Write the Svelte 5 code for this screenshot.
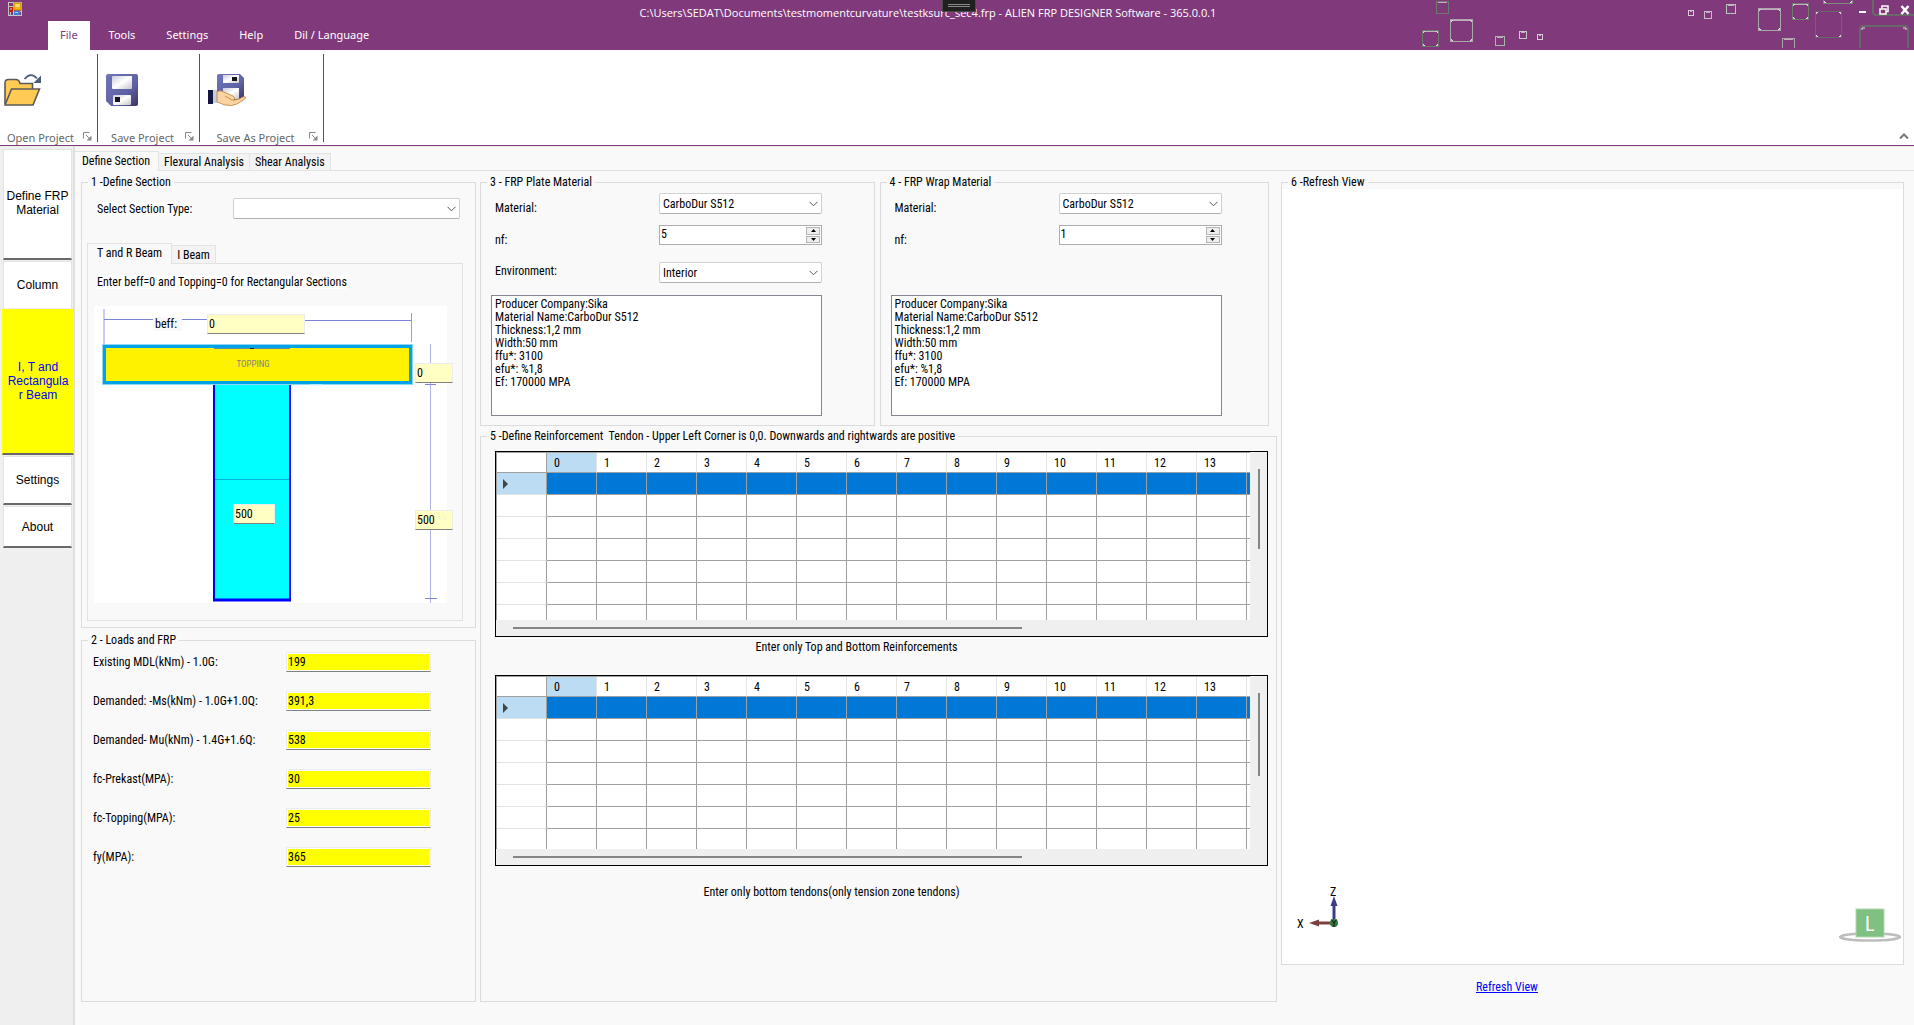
<script>
	const menus = ['File', 'Tools', 'Settings', 'Help', 'Dil / Language'];
	const pages = ['Define Section', 'Flexural Analysis', 'Shear Analysis'];
	// the last column is only partly scrolled into view
	const columns = [...Array.from({ length: 14 }, (_, i) => i), ''];
	const rows = Array.from({ length: 7 }, (_, i) => i);

	const sideButtons = [
		{ text: 'Define FRP Material', size: 'tall' },
		{ text: 'Column', size: 'short' },
		{ text: 'I, T and Rectangula r Beam', size: 'current' },
		{ text: 'Settings', size: 'short' },
		{ text: 'About', size: 'small' }
	];

	let loads = $state([
		{ id: 'mdl', label: 'Existing MDL(kNm) - 1.0G:', value: '199' },
		{ id: 'ms', label: 'Demanded: -Ms(kNm) - 1.0G+1.0Q:', value: '391,3' },
		{ id: 'mu', label: 'Demanded- Mu(kNm) - 1.4G+1.6Q:', value: '538' },
		{ id: 'fcp', label: 'fc-Prekast(MPA):', value: '30' },
		{ id: 'fct', label: 'fc-Topping(MPA):', value: '25' },
		{ id: 'fy', label: 'fy(MPA):', value: '365' }
	]);

	let beam = $state({ beff: '0', topping: '0', web: '500', height: '500' });
	let plate = $state({ nf: 5 });
	let wrap = $state({ nf: 1 });

	const materialInfo = `Producer Company:Sika
Material Name:CarboDur S512
Thickness:1,2 mm
Width:50 mm
ffu*: 3100
efu*: %1,8
Ef: 170000 MPA`;

	// title bar ornament: x, y, size, colour
	const squares = [
		[15, 1, 12, '#6f7a6f'],
		[29, 19, 22, '#a9a9a9'],
		[1, 30, 16, '#6f7a6f'],
		[74, 36, 9, '#a9b5a9'],
		[98, 31, 7, '#c9c9c9'],
		[116, 34, 5, '#d9c9d9'],
		[267, 10, 5, '#d9c9d9'],
		[283, 11, 7, '#c9b9c9'],
		[305, 4, 9, '#b9c5b9'],
		[337, 8, 22, '#a9a9a9'],
		[371, 3, 16, '#6f7a6f'],
		[394, 11, 26, '#666a66'],
		[402, -26, 29, '#7f8a7f'],
		[361, 38, 12, '#a9a9a9']
	];
</script>

{#snippet combo(id, options)}
	<div class="combo">
		<select {id}>
			{#each options as option}
				<option>{option}</option>
			{/each}
		</select>
		<svg viewBox="0 0 9 6" width="9" height="6"><path d="M.5 .8 L4.5 4.8 L8.5 .8" /></svg>
	</div>
{/snippet}

{#snippet spinner(id, target)}
	<div class="spinner">
		<input {id} type="number" bind:value={target.nf} />
		<div class="arrows">
			<button aria-label="Increase" onclick={() => target.nf++}>
				<svg viewBox="0 0 5 3" width="5" height="3"><path d="M0 3 L2.5 0 L5 3Z" /></svg>
			</button>
			<button aria-label="Decrease" onclick={() => target.nf--}>
				<svg viewBox="0 0 5 3" width="5" height="3"><path d="M0 0 L2.5 3 L5 0Z" /></svg>
			</button>
		</div>
	</div>
{/snippet}

{#snippet dataGrid(kind)}
	<div class="grid">
		<div class="grid-top">
			<div class="viewport {kind}">
				<table>
					<thead>
						<tr>
							<th class="corner"></th>
							{#each columns as column}
								<th class:picked={column === 0}>{column}</th>
							{/each}
						</tr>
					</thead>
					<tbody>
						{#each rows as row}
							<tr class:selected={row === 0}>
								<th>
									{#if row === 0}
										<svg viewBox="0 0 6 10" width="6" height="10"><path d="M0 0 L5 5 L0 10Z" /></svg>
									{/if}
								</th>
								{#each columns as column}
									<td></td>
								{/each}
							</tr>
						{/each}
					</tbody>
				</table>
			</div>
			<div class="vbar"><span></span></div>
		</div>
		<div class="hbar"><span></span></div>
	</div>
{/snippet}

{#snippet launcher()}
	<button class="launcher" aria-label="More">
		<svg viewBox="0 0 9 9" width="9" height="9">
			<path d="M.5 6.5 V.5 H6.5" fill="none" stroke="#888" />
			<path d="M3 3 L6 6" stroke="#888" />
			<path d="M8.500 3.500 V8.500 H3.500 Z" fill="#888" />
		</svg>
	</button>
{/snippet}

<div class="window">
	<header>
		<div class="titlebar">
			<svg class="appicon" viewBox="0 0 14 14" width="14" height="14">
				<rect x=".5" y=".5" width="13" height="13" fill="#80397b" stroke="#c4c4c4" />
				<path d="M5.500 1 V13 M1 9.500 H13 M1 4.500 H5 M2.500 10 V13" stroke="#c4c4c4" />
				<rect x="6" y="1" width="7" height="7" fill="#f2b90f" stroke="#c98a00" />
				<rect x="7.500" y="2" width="4" height="3" fill="#ffe27a" />
				<rect x="1" y="5" width="4" height="5" fill="#c41e10" />
				<rect x="2" y="6" width="2" height="2" fill="#f07060" />
				<rect x="6" y="9" width="6" height="4" fill="#3c7fe0" />
				<rect x="7" y="10" width="3" height="1" fill="#a8d0ff" />
			</svg>
			<h1>C:\Users\SEDAT\Documents\testmomentcurvature\testksurc_sec4.frp - ALIEN FRP DESIGNER Software - 365.0.0.1</h1>
		</div>
		<nav>
			{#each menus as menu, i}
				<button class:open={i === 0}>{menu}</button>
			{/each}
		</nav>
		<svg class="ornament" viewBox="0 0 493 48" width="493" height="48">
			{#each squares as [x, y, size, color]}
				<rect x={x + 0.5} y={y + 0.5} width={size} height={size} fill="none" stroke={color} />
				{#if size > 14}
					<path
						d="M{x + 1.5} {y + 3} V{y + 1.5} H{x + 3} M{x + size - 2} {y + 1.5} H{x + size - 0.5} V{y + 3} M{x + 1.5} {y + size - 2} V{y + size - 0.5} H{x + 3} M{x + size - 2} {y + size - 0.5} H{x + size - 0.5} V{y + size - 2}"
						fill="none"
						stroke="#e4dce4"
					/>
				{/if}
				{#if size < 24}
					<path d="M{x + 2} {y + 1.5} h{size - 3}" stroke="#e4dce4" stroke-opacity=".7" />
				{/if}
			{/each}
			<path d="M452 0 V13 L454 15 H493" fill="none" stroke="#686868" stroke-width="2" />
			<path d="M439 48 V28 L441 26 H485 L487 28 V48" fill="none" stroke="#686868" stroke-width="2" />
			<path d="M441 30 V28 H444 M482 28 H485 V30" fill="none" stroke="#e4dce4" />
		</svg>
		<div class="handle"><span></span><span></span></div>
		<div class="controls">
			<button aria-label="Minimize">
				<svg viewBox="0 0 10 10" width="10" height="10"><path d="M1 7 H8" stroke="#fff" stroke-width="2" /></svg>
			</button>
			<button aria-label="Restore">
				<svg viewBox="0 0 10 10" width="10" height="10" fill="none" stroke="#fff">
					<path d="M3 3.500 V1 H9 V6.500 H7" stroke-width="1.500" />
					<rect x="1" y="4" width="6" height="5" stroke-width="1.500" />
				</svg>
			</button>
			<button aria-label="Close">
				<svg viewBox="0 0 10 10" width="10" height="10"><path d="M1.500 1 L8.500 9 M8.500 1 L1.500 9" stroke="#fff" stroke-width="2.500" /></svg>
			</button>
		</div>
	</header>

	<div class="ribbon">
		<section>
			<button class="tool" aria-label="Open Project">
				<svg viewBox="0 0 37 32" width="37" height="32">
					<path d="M1 30 V9 Q1 5.500 4.500 5.500 H12 Q15 5.500 16 9.500 H28.500 V15" fill="#ffcb54" stroke="#5a5a5a" stroke-width="1.600" />
					<path d="M1 31 L7.500 15 H35.500 L29 31 Z" fill="#ffcb54" stroke="#5a5a5a" stroke-width="1.600" />
					<path d="M20.500 5 Q27 -2.500 33 4.500" fill="none" stroke="#4a5f78" stroke-width="1.800" />
					<path d="M37 1.500 V9 H29.500 Z" fill="#4a5f78" />
				</svg>
			</button>
			<footer><span>Open Project</span>{@render launcher()}</footer>
		</section>
		<section>
			<button class="tool" aria-label="Save Project">
				<svg viewBox="0 0 32 32" width="32" height="32">
					<defs>
						<linearGradient id="disk" x1="0" y1="0" x2="1" y2="1">
							<stop offset="0" stop-color="#6f74b8" /><stop offset=".6" stop-color="#5f63a5" /><stop offset="1" stop-color="#3e3560" />
						</linearGradient>
						<linearGradient id="paper" x1="0" y1="0" x2="1" y2="1">
							<stop offset="0" stop-color="#c8ccd4" /><stop offset=".5" stop-color="#fff" /><stop offset="1" stop-color="#c4c4cc" />
						</linearGradient>
					</defs>
					<path d="M2 0 H30 Q32 0 32 2 V30 Q32 32 30 32 H5 L0 27 V2 Q0 0 2 0Z" fill="url(#disk)" />
					<rect x="6" y="2" width="20" height="13" rx="1" fill="url(#paper)" />
					<rect x="7" y="21" width="18" height="10" rx="1" fill="url(#paper)" />
					<rect x="9" y="23" width="5" height="5" fill="#15151f" />
				</svg>
			</button>
			<footer><span>Save Project</span>{@render launcher()}</footer>
		</section>
		<section>
			<button class="tool" aria-label="Save As Project">
				<svg viewBox="0 0 38 32" width="38" height="32">
					<path d="M11 0 H32 L36 4 V24 Q36 26 34 26 H11 Q9 26 9 24 V2 Q9 0 11 0Z" fill="url(#disk)" />
					<rect x="15" y="1" width="16" height="8" fill="url(#paper)" />
					<rect x="24" y="3" width="5" height="4" fill="#15151f" />
					<rect x="15" y="14" width="16" height="11" fill="url(#paper)" />
					<rect x="0" y="16" width="5" height="14" fill="#141640" />
					<rect x="5" y="16" width="4" height="13" fill="#c9ccda" />
					<path d="M9 17.500 Q13 16 16 18 L25 22 Q28 24 26 26 L31 25 L36 22.500 Q38 22.500 37.500 24.500 L29 30 Q24 32.500 17 31 L9 28Z" fill="#fbd3a0" stroke="#b5803f" stroke-width=".8" />
					<path d="M17 22 L24 26 H27" fill="none" stroke="#b5803f" stroke-width=".8" />
				</svg>
			</button>
			<footer><span>Save As Project</span>{@render launcher()}</footer>
		</section>
		<button class="collapse" aria-label="Collapse ribbon">
			<svg viewBox="0 0 10 6" width="10" height="6"><path d="M1 5.500 L5 1.500 L9 5.500" fill="none" stroke="#777" stroke-width="2" /></svg>
		</button>
	</div>

	<div class="body">
		<aside>
			{#each sideButtons as item}
				<button class={item.size}>{item.text}</button>
			{/each}
		</aside>

		<main>
			<div class="tabs">
				{#each pages as page, i}
					<button class:active={i === 0}>{page}</button>
				{/each}
			</div>

			<div class="columns">
				<div class="column">
					<fieldset class="section">
						<legend>1 -Define Section</legend>
						<div class="type-row">
							<label for="sectionType"><span>Select Section Type:</span></label>
							{@render combo('sectionType', [''])}
						</div>
						<div class="tabs inner">
							<button class="active">T and R Beam</button>
							<button>I Beam</button>
						</div>
						<div class="panel">
							<p><span>Enter beff=0 and Topping=0 for Rectangular Sections</span></p>
							<div class="drawing">
								<svg viewBox="0 0 353 297" width="353" height="297">
									<rect width="353" height="297" fill="#fff" />
									<path d="M10 3 V38" stroke="#ccccf5" stroke-width="2" />
									<path d="M10 13.500 H114 M210 14.500 H318" stroke="#7c84d8" />
									<path d="M317.500 7 V36" stroke="#9a9ee6" />
									<rect x="120" y="76" width="76" height="218" fill="#00ffff" />
									<path d="M120 78 V294 M196 78 V294" stroke="#0000ff" stroke-width="2" />
									<path d="M119 294 H197" stroke="#0000ff" stroke-width="3" />
									<path d="M121 173.500 H195" stroke="#00b4dc" />
									<rect x="8.500" y="38.500" width="310" height="40" fill="none" stroke="#8fd6f6" />
									<rect x="10.500" y="40.500" width="306" height="36" fill="#fff200" stroke="#00a2e8" stroke-width="3" />
									<path d="M120 42.500 H196" stroke="#5f90a0" />
									<path d="M156 42.500 H160" stroke="#222" />
									<path d="M216 79 H228" stroke="#d8f0fa" />
									<text x="159" y="61" text-anchor="middle">TOPPING</text>
									<path d="M336.500 38 V297" stroke="#b4b4ec" />
									<path d="M331 78.500 H342 M331 292.500 H343" stroke="#7c84d8" />
								</svg>
								<label class="beff" for="beff">beff:</label>
								<input id="beff" class="beff-box" bind:value={beam.beff} />
								<input class="topping-box" aria-label="Topping" bind:value={beam.topping} />
								<input class="web-box" aria-label="Web width" bind:value={beam.web} />
								<input class="height-box" aria-label="Web height" bind:value={beam.height} />
							</div>
						</div>
					</fieldset>

					<fieldset class="grow">
						<legend>2 - Loads and FRP</legend>
						<div class="loads">
							{#each loads as load}
								<label for={load.id}>{load.label}</label>
								<input id={load.id} bind:value={load.value} />
							{/each}
						</div>
					</fieldset>
				</div>

				<div class="column">
					<div class="materials">
						<fieldset>
							<legend>3 - FRP Plate Material</legend>
							<div class="material">
								<label for="plateMaterial">Material:</label>
								{@render combo('plateMaterial', ['CarboDur S512'])}
								<label for="plateNf">nf:</label>
								{@render spinner('plateNf', plate)}
								<label class="level" for="environment">Environment:</label>
								{@render combo('environment', ['Interior'])}
								<textarea aria-label="Plate material data" value={materialInfo}></textarea>
							</div>
						</fieldset>
						<fieldset>
							<legend>4 - FRP Wrap Material</legend>
							<div class="material">
								<label for="wrapMaterial">Material:</label>
								{@render combo('wrapMaterial', ['CarboDur S512'])}
								<label for="wrapNf">nf:</label>
								{@render spinner('wrapNf', wrap)}
								<textarea aria-label="Wrap material data" value={materialInfo}></textarea>
							</div>
						</fieldset>
					</div>

					<fieldset class="grow reinforcement">
						<legend>5 -Define Reinforcement&nbsp; Tendon - Upper Left Corner is 0,0. Downwards and rightwards are positive</legend>
						{@render dataGrid('bars')}
						<p class="bars-note">Enter only Top and Bottom Reinforcements</p>
						{@render dataGrid('tendons')}
						<p class="tendons-note">Enter only bottom tendons(only tension zone tendons)</p>
					</fieldset>
				</div>

				<div class="column">
					<fieldset class="grow view">
						<legend>6 -Refresh View</legend>
						<div class="scene">
							<svg class="axes" viewBox="0 0 50 50" width="50" height="50">
								<path d="M41 42 V18" stroke="#3c3c84" stroke-width="3" />
								<path d="M41 11 L44.500 21 H37.500Z" fill="#3c3c84" />
								<path d="M41 38 H24" stroke="#7c4040" stroke-width="3" />
								<path d="M16 38 L26 34.500 V41.500Z" fill="#7c4040" />
								<circle cx="41" cy="38" r="4" fill="#2f7a3c" />
								<path d="M38.500 34.500 L41 38 L43.500 34.500 M41 38 V42" fill="none" stroke="#111" />
								<text x="37" y="11">Z</text>
								<text x="4" y="43">X</text>
							</svg>
							<svg viewBox="0 0 64 36" width="64" height="36">
								<ellipse cx="33" cy="30" rx="30" ry="3.500" fill="none" stroke="#bdbdbd" stroke-width="2.500" />
								<rect x="19" y="2" width="28" height="28" fill="#80c080" stroke="#b4d8b4" />
								<text class="face" x="28" y="24">L</text>
							</svg>
						</div>
					</fieldset>
					<a href="#refresh">Refresh View</a>
				</div>
			</div>
		</main>
	</div>
</div>

<style>
	:global(body) {
		margin: 0;
	}
	.window {
		display: flex;
		flex-direction: column;
		min-height: 100vh;
		background: #f9f9f9;
		color: #000;
		font: 12px/14px 'Roboto Condensed', 'Liberation Sans', sans-serif;
	}
	.window * {
		box-sizing: border-box;
	}
	button,
	input,
	select,
	textarea {
		font: inherit;
		color: inherit;
		margin: 0;
		padding: 0;
		border: 0;
		border-radius: 0;
		background: none;
		min-width: 0;
	}
	svg {
		display: block;
	}
	p {
		margin: 0;
	}

	/* title bar and menu */
	header {
		position: relative;
		background: #80397b;
		color: #fff;
		font-family: 'Noto Sans', 'Open Sans', sans-serif;
		font-size: 11px;
		overflow: hidden;
	}
	.titlebar {
		display: flex;
		align-items: center;
		height: 21px;
		padding: 0 80px 0 8px;
	}
	.appicon {
		flex: none;
		margin-bottom: 4px;
	}
	h1 {
		flex: 1;
		margin: 0;
		padding-top: 4px;
		font: 500 11px/14px 'Open Sans', 'Noto Sans', sans-serif;
		text-align: center;
		white-space: nowrap;
	}
	nav {
		display: flex;
		gap: 7px;
		height: 29px;
		padding-left: 48px;
	}
	nav button {
		padding: 0 12px 2px;
	}
	nav .open {
		background: #fff;
		color: #80397b;
	}
	.ornament {
		position: absolute;
		top: 0;
		right: 0;
	}
	.handle {
		position: absolute;
		top: 0;
		left: 942px;
		width: 34px;
		height: 12px;
		padding: 4px 5px;
		background: #202020;
		border: 1px solid #4a4a4a;
		border-top: 0;
		display: flex;
		flex-direction: column;
		gap: 1px;
	}
	.handle span {
		height: 1px;
		background: #8a8a8a;
	}
	.controls {
		position: absolute;
		top: 5px;
		right: 4px;
		display: flex;
		gap: 11px;
	}

	/* ribbon */
	.ribbon {
		display: flex;
		height: 96px;
		background: #fff;
		border-bottom: 1px solid #80397b;
		padding: 4px 0 3px;
		color: #666;
		font-family: 'Noto Sans', 'Open Sans', sans-serif;
		font-size: 11px;
	}
	.ribbon section {
		display: flex;
		flex-direction: column;
		justify-content: space-between;
		width: 102px;
		padding: 20px 5px 0 8px;
		border-right: 1px solid #80397b;
	}
	.ribbon section:first-child {
		width: 98px;
		padding-left: 4px;
	}
	.ribbon section:nth-child(3) {
		width: 124px;
	}
	.tool {
		align-self: flex-start;
	}
	.ribbon footer {
		display: flex;
		align-items: center;
		gap: 6px;
		text-align: center;
		height: 12px;
	}
	.ribbon footer span {
		flex: 1;
		padding-top: 4px;
		white-space: nowrap;
	}
	.collapse {
		align-self: flex-end;
		margin-left: auto;
		padding: 3px 5px;
	}

	.body {
		flex: 1;
		display: flex;
	}
	aside {
		flex: none;
		width: 75px;
		padding: 3px 1px 0 3px;
		background: #efefef;
		border-right: 2px solid #e0e0e0;
		display: flex;
		flex-direction: column;
		gap: 1px;
	}
	aside button {
		font: 12px/14px 'Liberation Sans', sans-serif;
		background: #fff;
		border: 1px solid #e3e3e3;
		border-bottom: 2px solid #696969;
	}
	aside .tall {
		height: 111px;
		padding-bottom: 2px;
	}
	aside .short {
		height: 49px;
	}
	aside .short:nth-child(2) {
		height: 47px;
		border-bottom: 0;
	}
	aside .current {
		height: 146px;
		margin: 0 -2px 0 -1px;
		padding: 0 2px 2px;
		background: #ff0;
		border-color: #ff0;
		border-bottom-color: #696969;
		color: #00f;
	}
	aside .small {
		height: 42px;
	}

	main {
		flex: 1;
		min-width: 0;
		display: flex;
		flex-direction: column;
		padding-top: 4px;
		border-top: 1px solid #eee;
	}
	.tabs {
		display: flex;
		align-items: flex-end;
		height: 20px;
		box-shadow: inset 0 -1px #e0e0e0;
	}
	.tabs button {
		height: 18px;
		padding: 0 5px;
		background: #f3f3f3;
		border: 1px solid #e3e3e3;
		border-left: 0;
	}
	.tabs .active {
		height: 20px;
		padding: 0 8px 2px 7px;
		background: #f9f9f9;
		border-bottom: 0;
	}

	.columns {
		flex: 1;
		display: grid;
		grid-template-columns: 395fr 797fr 623fr;
		column-gap: 4px;
		padding: 4px 10px 23px 6px;
	}
	.column {
		display: flex;
		flex-direction: column;
		min-width: 0;
	}
	fieldset {
		min-width: 0;
		margin: 0;
		padding: 0;
		border: 1px solid #dcdcdc;
	}
	legend {
		margin-left: 6px;
		padding: 0 3px;
		white-space: nowrap;
	}
	.grow {
		flex: 1;
	}

	.combo {
		position: relative;
		height: 21px;
	}
	.combo select {
		appearance: none;
		width: 100%;
		height: 21px;
		padding: 0 3px;
		background: #fff;
		border: 1px solid #d0d0d0;
		border-bottom-color: #b0b0b0;
		border-radius: 2px;
	}
	.combo svg {
		position: absolute;
		right: 4px;
		top: 8px;
		fill: none;
		stroke: #555;
		pointer-events: none;
	}
	.spinner {
		display: flex;
		height: 20px;
		background: #fff;
		border: 1px solid #abadb3;
	}
	.spinner input {
		flex: 1;
		padding: 0 1px 2px;
		appearance: textfield;
	}
	.spinner input::-webkit-inner-spin-button {
		appearance: none;
	}
	.arrows {
		display: flex;
		flex-direction: column;
		gap: 1px;
		width: 15px;
		padding: 1px 1px 1px 0;
	}
	.arrows button {
		flex: 1;
		display: flex;
		align-items: center;
		justify-content: center;
		background: #efefef;
		border: 1px solid #b4b4b4;
	}

	/* section definition */
	.section {
		margin-bottom: 5px;
	}
	.type-row {
		display: flex;
		align-items: center;
		padding: 9px 15px 0;
	}
	.type-row label {
		width: 136px;
	}
	.type-row .combo {
		flex: 1;
	}
	.type-row label span,
	.panel p span {
		background: #fff;
	}
	.tabs.inner {
		margin: 24px 12px 0 5px;
		height: 21px;
	}
	.inner button {
		height: 19px;
	}
	.inner .active {
		height: 21px;
		padding: 0 9px 2px;
		border-left: 1px solid #e3e3e3;
	}
	.panel {
		margin: 0 12px 6px 5px;
		padding: 11px 6px 17px;
		border: 1px solid #e3e3e3;
		border-top: 0;
	}
	.panel p {
		padding: 0 3px;
		margin-bottom: 17px;
	}
	.drawing {
		position: relative;
	}
	.drawing text {
		font-size: 9px;
		fill: #7f7f7f;
	}
	.drawing input,
	.loads input {
		height: 20px;
		padding: 0 1px 1px;
		background: #ffffc4;
		border: 1px solid #ececec;
		border-bottom-color: #808080;
	}
	.drawing input,
	.drawing .beff {
		position: absolute;
	}
	.beff {
		left: 59px;
		top: 11px;
		padding: 0 5px 0 2px;
		background: #f9f9f9;
	}
	.drawing .beff-box {
		left: 113px;
		top: 8px;
		width: 98px;
	}
	.drawing .topping-box {
		left: 321px;
		top: 57px;
		width: 38px;
	}
	.drawing .web-box {
		left: 139px;
		top: 198px;
		width: 42px;
	}
	.drawing .height-box {
		left: 321px;
		top: 204px;
		width: 38px;
	}

	.loads {
		display: grid;
		grid-template-columns: 193px 145px;
		row-gap: 19px;
		align-items: center;
		padding: 5px 0 0 11px;
	}
	.loads input {
		background: #ff0;
		box-shadow: inset 0 0 0 1px #fff;
	}

	/* materials */
	.materials {
		display: grid;
		grid-template-columns: 394fr 389fr;
		column-gap: 5px;
		padding-right: 8px;
		height: 251px;
		margin-bottom: 3px;
	}
	.material {
		display: grid;
		grid-template-columns: 168px minmax(0, 1fr);
		grid-template-rows: 32px 37px 33px 121px;
		align-items: start;
		max-width: 386px;
		padding: 4px 45px 0 10px;
	}
	.material label {
		padding: 8px 4px 0;
	}
	.material .level {
		padding-top: 2px;
	}
	.material textarea {
		grid-column: 1 / 3;
		grid-row: 4;
		height: 121px;
		padding: 2px 3px;
		line-height: 13px;
		background: #fff;
		border: 1px solid #828790;
		resize: none;
		overflow: hidden;
	}

	/* reinforcement tables */
	.reinforcement .grid {
		margin: 0 8px 0 14px;
	}
	.reinforcement {
		padding-top: 8px;
	}
	.grid {
		background: #efefef;
		border: 1px solid #000;
	}
	.grid-top {
		display: flex;
	}
	.viewport {
		flex: 1;
		min-width: 0;
		overflow: hidden;
		background: #fff;
		border-top: 1px solid #a0a0a0;
		border-left: 1px solid #a0a0a0;
	}
	.bars {
		height: 168px;
	}
	.tendons {
		height: 173px;
	}
	table {
		width: 800px;
		table-layout: fixed;
		border-spacing: 0;
	}
	th,
	td {
		height: 22px;
		padding: 0 7px;
		border-right: 1px solid #a0a0a0;
		border-bottom: 1px solid #a0a0a0;
	}
	th {
		font-weight: normal;
		text-align: left;
	}
	thead th {
		height: 20px;
		border-right-color: #e3e3e3;
	}
	thead .corner {
		border-right-color: #a0a0a0;
	}
	tbody th {
		padding: 0 6px;
		border-bottom-color: #e3e3e3;
	}
	th svg {
		fill: #444;
	}
	.picked,
	.selected th {
		background: #bcdcf4;
	}
	.selected td {
		background: #0078d7;
	}
	.vbar {
		width: 17px;
		padding: 17px 7px;
	}
	.vbar span {
		display: block;
		width: 2px;
		height: 60%;
		margin-left: 1px;
		background: #858585;
	}
	.hbar {
		height: 16px;
		padding: 7px 17px;
	}
	.hbar span {
		display: block;
		width: 69%;
		height: 2px;
		background: #858585;
	}
	.bars-note,
	.tendons-note {
		text-align: center;
	}
	.bars-note {
		padding: 3px 44px 21px 0;
	}
	.tendons-note {
		padding: 19px 94px 0 0;
	}

	/* 3D view */
	.view {
		display: flex;
		flex-direction: column;
	}
	.scene {
		display: flex;
		justify-content: space-between;
		align-items: flex-end;
		height: 100%;
		min-height: 300px;
		padding: 0 2px 21px 11px;
		background: #fff;
	}
	.scene .axes {
		margin-bottom: 8px;
	}
	.scene .face {
		font-size: 20px;
		fill: #fff;
	}
	.column > a {
		align-self: flex-start;
		margin-left: 195px;
		padding: 15px 0 8px;
		color: #00f;
	}
</style>
